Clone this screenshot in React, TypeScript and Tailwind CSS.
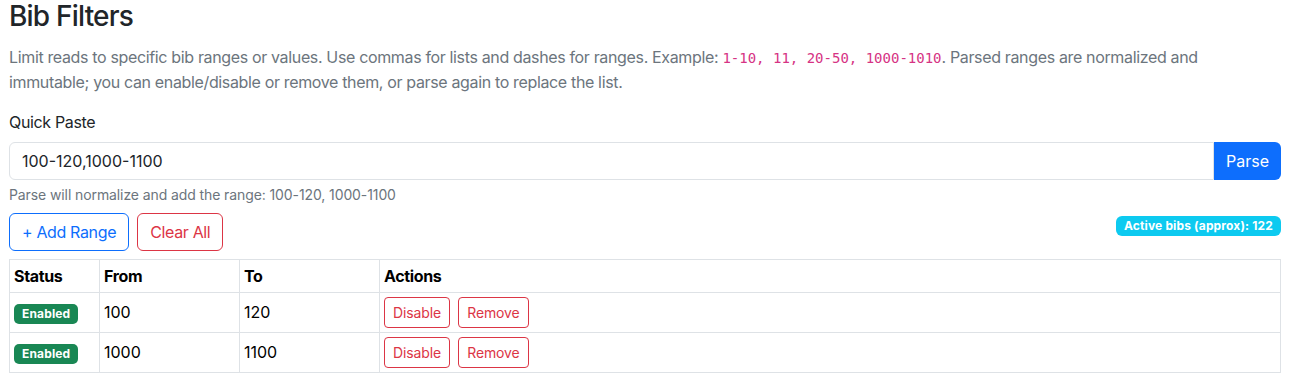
import React, { useState } from "react";

type Range = { from: number; to: number; enabled: boolean };

const App = () => {
  const [text, setText] = useState("100-120,1000-1100");
  const [ranges, setRanges] = useState<Range[]>([
    { from: 100, to: 120, enabled: true },
    { from: 1000, to: 1100, enabled: true },
  ]);

  return (
    <div
      className="min-h-screen bg-white px-[9px] tracking-[-0.35px] text-[#212529]"
      style={{ fontFamily: "Inter, 'Noto Sans', sans-serif" }}
    >
      <h3 className="mb-[11px] text-[28px] font-medium leading-[1.2] tracking-[-0.8px]">Bib Filters</h3>

      <p className="mb-4 text-base leading-6 text-[#6c757d]">
        Limit reads to specific bib ranges or values. Use commas for lists and dashes for ranges. Example:{" "}
        <code className="font-['DejaVu_Sans_Mono',monospace] text-[14px] tracking-normal text-[#d63384]">
          1-10, 11, 20-50, 1000-1010
        </code>
        . Parsed ranges are normalized and
        <br />
        immutable; you can enable/disable or remove them, or parse again to replace the list.
      </p>

      {/* Quick paste */}
      <label className="mb-2 block text-base leading-6">Quick Paste</label>
      <div className="flex">
        <input
          value={text}
          onChange={(e) => setText(e.target.value)}
          className="h-[38px] flex-1 rounded-l-[6px] border border-[#dee2e6] px-3 text-base tracking-normal text-[#212529] outline-none"
        />
        <button className="h-[38px] rounded-r-[6px] bg-[#0d6efd] px-3 text-base tracking-normal text-white">
          Parse
        </button>
      </div>
      <div className="mt-1 text-[14px] leading-[21px] tracking-[-0.1px] text-[#6c757d]">
        Parse will normalize and add the range: 100-120, 1000-1100
      </div>

      {/* Toolbar */}
      <div className="mb-2 mt-2 flex items-start justify-between">
        <div className="flex gap-2">
          <button className="h-[38px] rounded-[6px] border border-[#0d6efd] px-3 text-base text-[#0d6efd]">
            + Add Range
          </button>
          <button
            onClick={() => setRanges([])}
            className="h-[38px] rounded-[6px] border border-[#dc3545] px-3 text-base text-[#dc3545]"
          >
            Clear All
          </button>
        </div>
        <span className="mt-[3px] rounded-[6px] bg-[#0dcaf0] px-[8px] py-[4px] text-[12px] font-bold leading-[12px] tracking-[0.15px] text-white">
          Active bibs (approx): 122
        </span>
      </div>

      {/* Table */}
      <table className="w-full border-collapse border border-[#dee2e6] text-base text-black">
        <thead>
          <tr>
            <th className="w-[90px] border border-[#dee2e6] px-1 py-1 text-left font-bold leading-6">Status</th>
            <th className="w-[140px] border border-[#dee2e6] px-1 py-1 text-left font-bold leading-6">From</th>
            <th className="w-[140px] border border-[#dee2e6] px-1 py-1 text-left font-bold leading-6">To</th>
            <th className="border border-[#dee2e6] px-1 py-1 text-left font-bold leading-6">Actions</th>
          </tr>
        </thead>
        <tbody>
          {ranges.map((r, i) => (
            <tr key={i}>
              <td className="border border-[#dee2e6] px-1 py-1">
                <span className="inline-block rounded-[5px] bg-[#198754] px-[8px] py-[4px] align-middle text-[12px] font-bold leading-[12px] tracking-[0.15px] text-white">
                  {r.enabled ? "Enabled" : "Disabled"}
                </span>
              </td>
              <td className="border border-[#dee2e6] px-1 py-1 tracking-normal">{r.from}</td>
              <td className="border border-[#dee2e6] px-1 py-1 tracking-normal">{r.to}</td>
              <td className="border border-[#dee2e6] px-1 py-1">
                <div className="flex gap-2">
                  <button
                    onClick={() =>
                      setRanges(ranges.map((x, j) => (j === i ? { ...x, enabled: !x.enabled } : x)))
                    }
                    className="h-[31px] rounded-[4px] border border-[#dc3545] px-2 text-[14px] tracking-[-0.1px] text-[#dc3545]"
                  >
                    Disable
                  </button>
                  <button
                    onClick={() => setRanges(ranges.filter((_, j) => j !== i))}
                    className="h-[31px] rounded-[4px] border border-[#dc3545] px-2 text-[14px] tracking-[-0.1px] text-[#dc3545]"
                  >
                    Remove
                  </button>
                </div>
              </td>
            </tr>
          ))}
        </tbody>
      </table>
    </div>
  );
};

export default App;
